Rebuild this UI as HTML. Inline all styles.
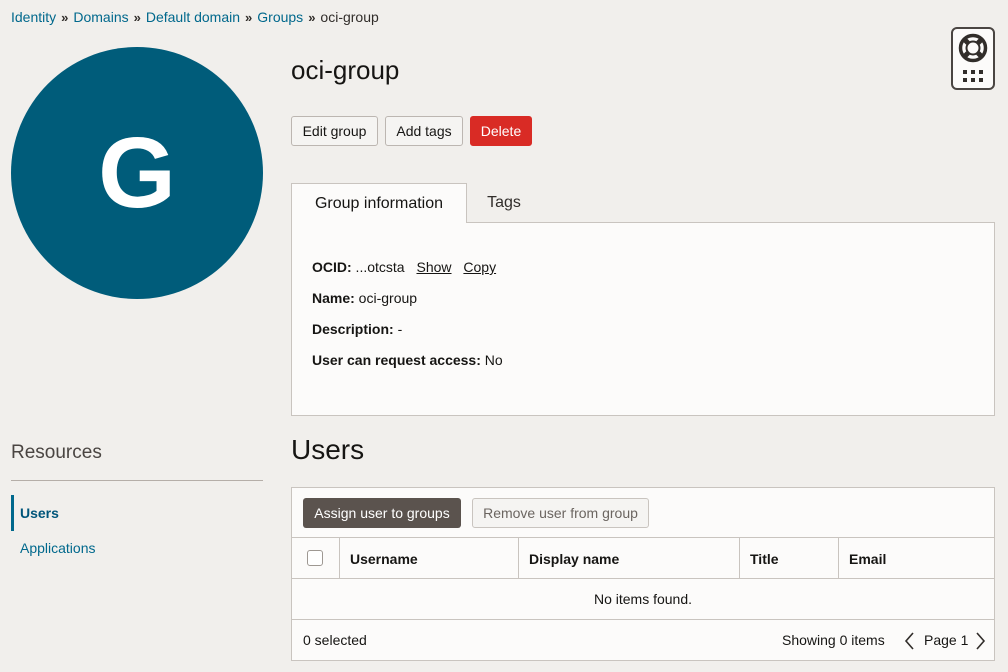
<!DOCTYPE html>
<html><head><meta charset="utf-8"><style>
*{box-sizing:border-box}
body{margin:0;width:1008px;height:672px;background:#f1efec;font-family:"Liberation Sans",sans-serif;color:#161513;position:relative;overflow:hidden;font-size:14px}
.a{position:absolute}
.bc{left:11px;top:9px;font-size:14px;color:#312d2a}
.bc a{color:#00688c;text-decoration:none}
.bc span{font-size:13px;margin:0 5px;color:#312d2a;font-weight:bold}
.circ{left:11px;top:47px;width:252px;height:252px;border-radius:50%;background:#005c7a;color:#fff;font-size:100px;font-weight:bold;text-align:center;line-height:252px}
.btn{position:absolute;top:116px;height:30px;border:1px solid #bcb6b1;border-radius:3px;background:#f5f4f2;font-size:14px;line-height:28px;text-align:center;color:#161513}
.panel{left:291px;top:222px;width:704px;height:194px;background:#fcfbfa;border:1px solid #c9c4bf}
.tab{top:183px;height:40px;font-size:16px;line-height:40px;text-align:center}
.info{left:312px;font-size:14px}
.info b{font-weight:bold}
.info u{margin-left:8px}
.tbl{left:291px;top:487px;width:704px;height:174px;background:#fcfbfa;border:1px solid #c9c4bf}
.hl{position:absolute;left:0;right:0;height:1px;background:#c9c4bf}
.vl{position:absolute;top:50px;height:41px;width:1px;background:#c9c4bf}
.th{position:absolute;top:63px;font-weight:bold;font-size:14px}
</style></head><body>
<div class="a bc"><a>Identity</a><span>»</span><a>Domains</a><span>»</span><a>Default domain</a><span>»</span><a>Groups</a><span>»</span>oci-group</div>
<div class="a circ">G</div>
<div class="a" style="left:291px;top:55px;font-size:26px;color:#161513">oci-group</div>
<div class="btn" style="left:291px;width:87px">Edit group</div>
<div class="btn" style="left:385px;width:78px">Add tags</div>
<div class="btn" style="left:470px;width:62px;background:#d92b25;border-color:#d92b25;color:#fff">Delete</div>
<div class="a panel"></div>
<div class="a tab" style="left:291px;width:176px;background:#fcfbfa;border:1px solid #c9c4bf;border-bottom:none;height:40px">Group information</div>
<div class="a tab" style="left:467px;width:74px;color:#312d2a">Tags</div>
<div class="a info" style="top:259px"><b>OCID:</b> ...otcsta <u>Show</u> <u>Copy</u></div>
<div class="a info" style="top:290px"><b>Name:</b> oci-group</div>
<div class="a info" style="top:321px"><b>Description:</b> -</div>
<div class="a info" style="top:352px"><b>User can request access:</b> No</div>
<div class="a" style="left:11px;top:442px;font-size:19px;color:#4a4542;font-weight:300">Resources</div>
<div class="a" style="left:11px;top:480px;width:252px;height:1px;background:#b5aea8"></div>
<div class="a" style="left:11px;top:495px;width:3px;height:36px;background:#00688c"></div>
<div class="a" style="left:20px;top:505px;font-weight:bold;color:#00557a">Users</div>
<div class="a" style="left:20px;top:540px;color:#00688c">Applications</div>
<div class="a" style="left:291px;top:434px;font-size:28px">Users</div>
<div class="a tbl">
<div class="a" style="left:11px;top:10px;width:158px;height:30px;background:#5b534e;color:#fff;border-radius:3px;line-height:30px;text-align:center">Assign user to groups</div>
<div class="a" style="left:180px;top:10px;width:177px;height:30px;border:1px solid #c9c4bf;background:#f5f4f2;color:#6b6560;border-radius:3px;line-height:28px;text-align:center">Remove user from group</div>
<div class="hl" style="top:49px"></div>
<div class="a" style="left:15px;top:62px;width:16px;height:16px;border:1px solid #9e9892;border-radius:3px;background:#fff"></div>
<div class="vl" style="left:47px"></div><div class="vl" style="left:226px"></div><div class="vl" style="left:447px"></div><div class="vl" style="left:546px"></div>
<div class="th" style="left:58px">Username</div>
<div class="th" style="left:237px">Display name</div>
<div class="th" style="left:458px">Title</div>
<div class="th" style="left:557px">Email</div>
<div class="hl" style="top:90px"></div>
<div class="a" style="left:0;width:702px;top:103px;text-align:center">No items found.</div>
<div class="hl" style="top:131px"></div>
<div class="a" style="left:11px;top:144px">0 selected</div>
<div class="a" style="left:490px;top:144px">Showing 0 items</div>
<svg class="a" style="left:611px;top:144px" width="12" height="18" viewBox="0 0 12 18"><path d="M10 1 L3 9 L10 17" fill="none" stroke="#312d2a" stroke-width="1.6"/></svg>
<div class="a" style="left:632px;top:144px">Page 1</div>
<svg class="a" style="left:683px;top:144px" width="12" height="18" viewBox="0 0 12 18"><path d="M2 1 L9 9 L2 17" fill="none" stroke="#312d2a" stroke-width="1.6"/></svg>
</div>
<div class="a" style="left:951px;top:27px;width:44px;height:63px;border:2px solid #4a4542;border-radius:6px;background:#fcfbfa">
<svg width="40" height="59" viewBox="0 0 40 59"><circle cx="20" cy="19" r="12.5" fill="none" stroke="#312d2a" stroke-width="3.5"/><circle cx="20" cy="19" r="6.5" fill="none" stroke="#312d2a" stroke-width="2"/><g stroke="#312d2a" stroke-width="5"><line x1="11.5" y1="10.5" x2="15" y2="14"/><line x1="28.5" y1="10.5" x2="25" y2="14"/><line x1="11.5" y1="27.5" x2="15" y2="24"/><line x1="28.5" y1="27.5" x2="25" y2="24"/></g><g fill="#312d2a"><rect x="10" y="41" width="4" height="4"/><rect x="18" y="41" width="4" height="4"/><rect x="26" y="41" width="4" height="4"/><rect x="10" y="49" width="4" height="4"/><rect x="18" y="49" width="4" height="4"/><rect x="26" y="49" width="4" height="4"/></g></svg>
</div>
</body></html>
